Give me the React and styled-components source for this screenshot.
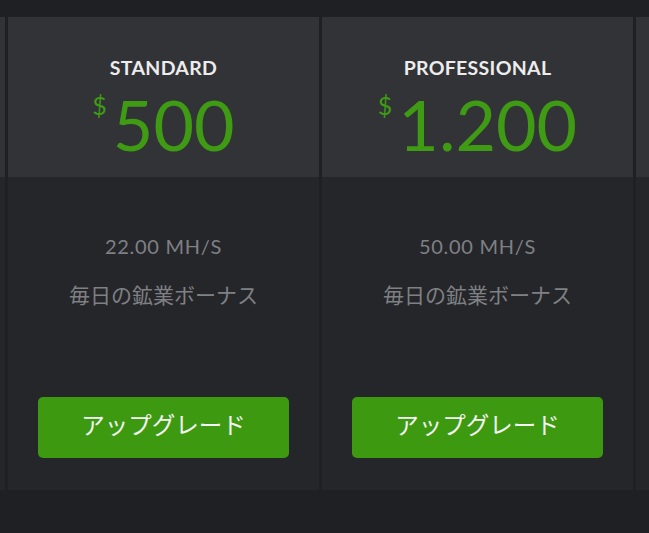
import styled, { createGlobalStyle } from "styled-components";

const GlobalStyle = createGlobalStyle`
  html, body {
    margin: 0;
    padding: 0;
    background-color: #1f2023;
    overflow: hidden;
  }
  body {
    font-family: "Lato", "Noto Sans CJK JP", sans-serif;
  }
`;

const Page = styled.div`
  width: 649px;
  height: 533px;
  padding-top: 17px;
  box-sizing: border-box;
  overflow: hidden;
`;

const Row = styled.div`
  display: flex;
  gap: 3px;
  margin-left: -306px;
`;

const Card = styled.div`
  flex: 0 0 311px;
  display: flex;
  flex-direction: column;
  height: 473px;
  background-color: #25262a;
`;

const Header = styled.div`
  height: 160px;
  background-color: #323337;
  display: flex;
  flex-direction: column;
  align-items: center;
  padding-top: 39px;
  box-sizing: border-box;
`;

const Title = styled.h3`
  margin: 0;
  color: #ececec;
  font-family: "Lato", sans-serif;
  font-weight: 700;
  font-size: 19.5px;
  line-height: 24px;
  letter-spacing: 0.3px;
`;

const Price = styled.div`
  display: flex;
  align-items: flex-start;
  color: #3f9a14;
  margin-top: 9px;
`;

const Dollar = styled.span`
  font-size: 25px;
  line-height: 25px;
  margin-top: 4px;
  margin-right: 6px;
`;

const Amount = styled.span`
  font-size: 70px;
  line-height: 70px;
  font-weight: 400;
`;

const Body = styled.div`
  display: flex;
  flex-direction: column;
  align-items: center;
  padding: 56px 30px 0;
`;

const Speed = styled.div`
  color: #7f8084;
  font-size: 20px;
  line-height: 26px;
  letter-spacing: 0.7px;
`;

const Bonus = styled.div`
  margin-top: 22px;
  color: #7f8084;
  font-family: "Noto Sans CJK JP", sans-serif;
  font-size: 21px;
  line-height: 26px;
`;

const Button = styled.button`
  margin-top: 90px;
  width: 100%;
  height: 61px;
  padding: 0 0 8px;
  border: none;
  border-radius: 5px;
  background-color: #3d9a10;
  color: #f4f4f4;
  font-family: "Noto Sans CJK JP", sans-serif;
  font-size: 23.5px;
  cursor: pointer;
`;

const plans = [
  { title: "BASIC", price: "100", speed: "4.00 MH/S" },
  { title: "STANDARD", price: "500", speed: "22.00 MH/S" },
  { title: "PROFESSIONAL", price: "1.200", speed: "50.00 MH/S" },
  { title: "ENTERPRISE", price: "2.500", speed: "110.00 MH/S" },
];

export default function App() {
  return (
    <Page>
      <GlobalStyle />
      <Row>
        {plans.map((p) => (
          <Card key={p.title}>
            <Header>
              <Title>{p.title}</Title>
              <Price>
                <Dollar>$</Dollar>
                <Amount>{p.price}</Amount>
              </Price>
            </Header>
            <Body>
              <Speed>{p.speed}</Speed>
              <Bonus>毎日の鉱業ボーナス</Bonus>
              <Button>アップグレード</Button>
            </Body>
          </Card>
        ))}
      </Row>
    </Page>
  );
}
